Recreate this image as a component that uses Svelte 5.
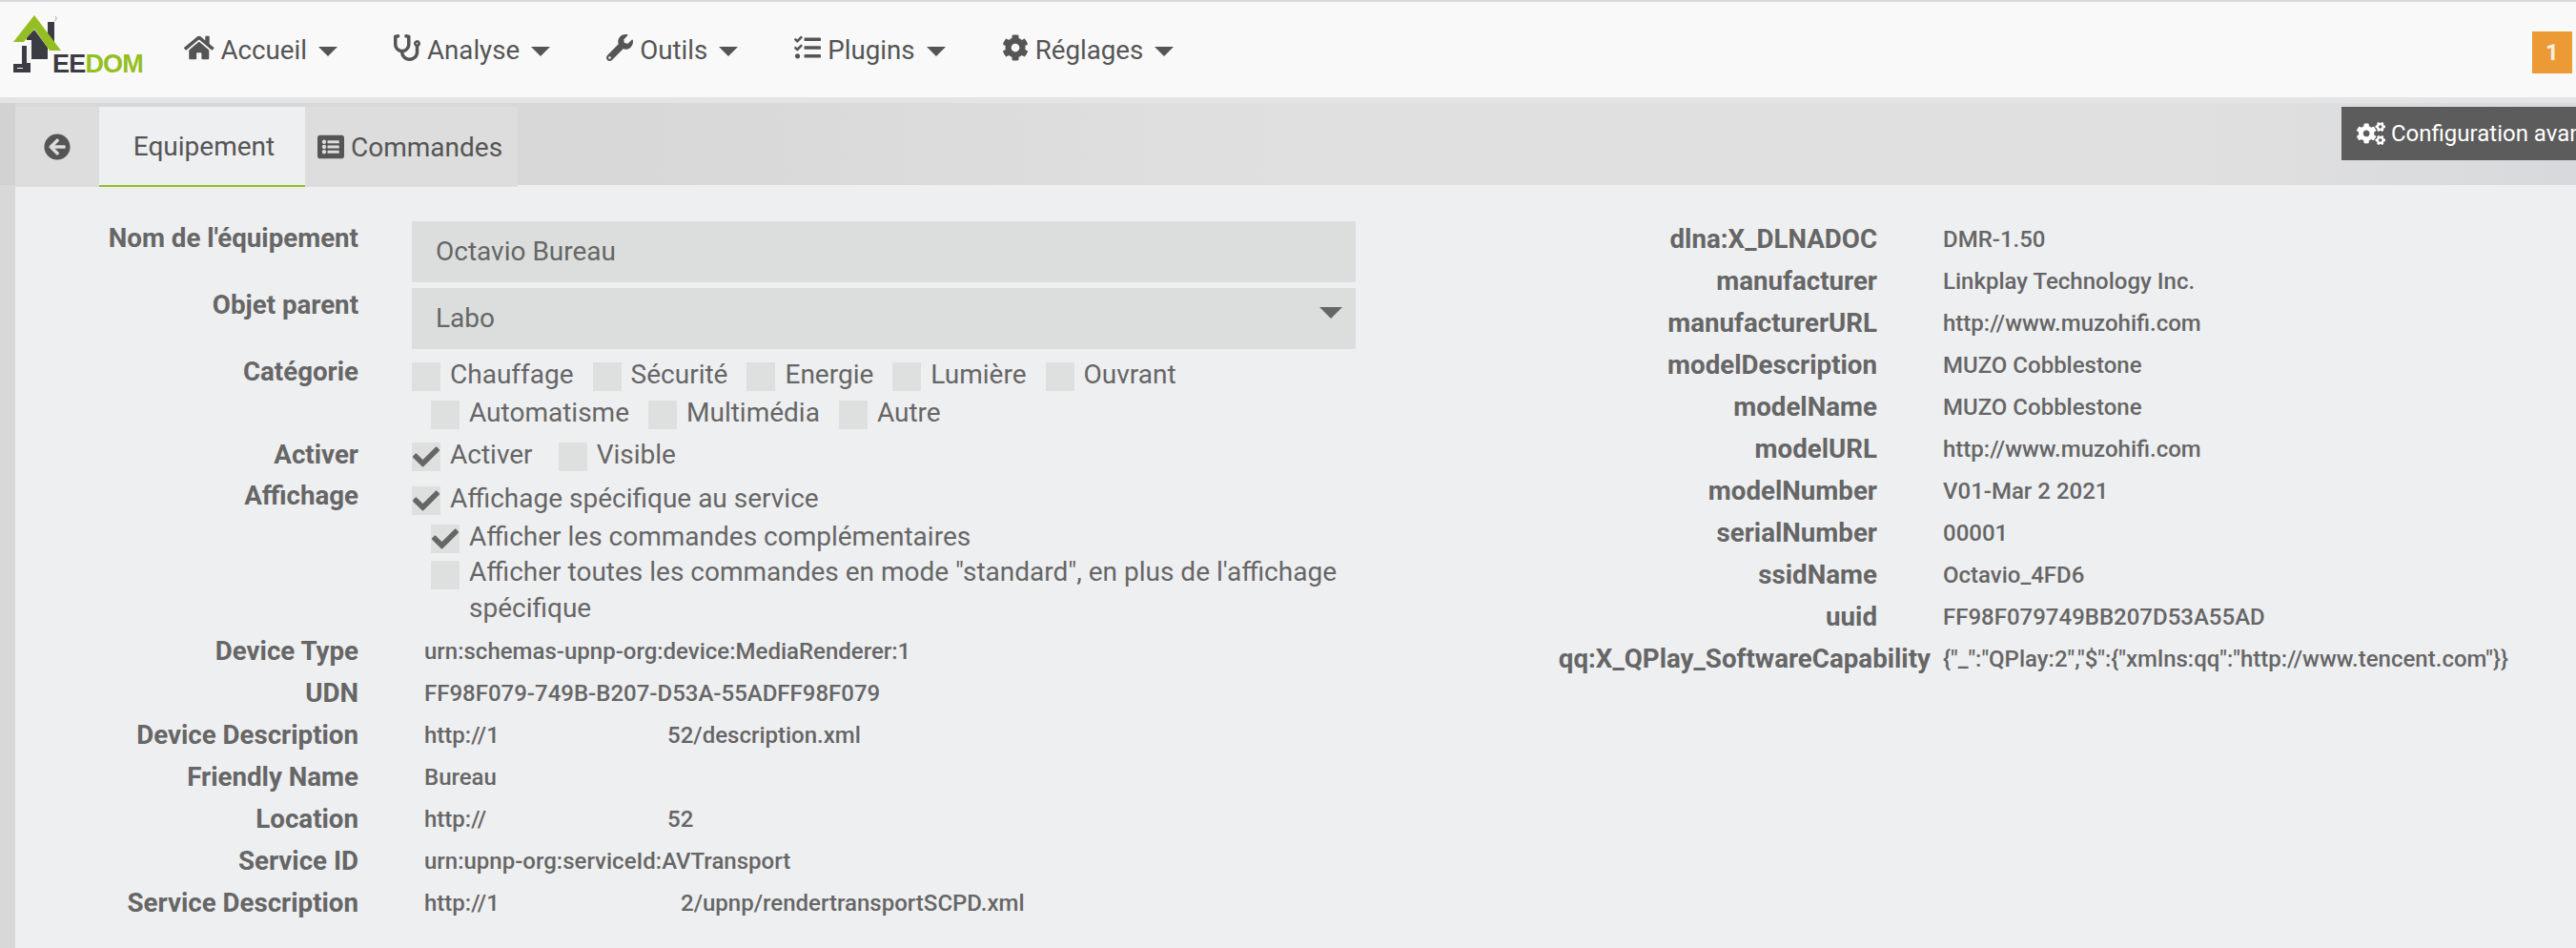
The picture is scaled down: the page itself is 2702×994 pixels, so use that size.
<script>
  const icons = {
    home: { w: 576, d: "M280.37 148.26L96 300.11V464a16 16 0 0 0 16 16l112.06-.29a16 16 0 0 0 15.92-16V368a16 16 0 0 1 16-16h64a16 16 0 0 1 16 16v95.64a16 16 0 0 0 16 16.05L464 480a16 16 0 0 0 16-16V300L295.67 148.26a12.19 12.19 0 0 0-15.3 0zM571.6 251.47L488 182.56V44.05a12 12 0 0 0-12-12h-56a12 12 0 0 0-12 12v72.61L318.47 43a48 48 0 0 0-61 0L4.34 251.47a12 12 0 0 0-1.6 16.9l25.5 31A12 12 0 0 0 45.15 301l235.22-193.74a12.19 12.19 0 0 1 15.3 0L530.9 301a12 12 0 0 0 16.9-1.6l25.5-31a12 12 0 0 0-1.7-16.93z" },
    stethoscope: { w: 512, d: "M447.1 112c-34.2.5-62.3 28.4-63 62.6-.5 24.3 12.5 45.6 32 56.8V344c0 57.3-50.2 104-112 104-60 0-109.2-44.1-111.9-99.2C265 333.8 320 269.2 320 192V36.6c0-11.4-8.1-21.3-19.3-23.5L237.8.5c-13-2.6-25.6 5.8-28.2 18.8L206.4 35c-2.6 13 5.8 25.6 18.8 28.2l30.7 6.1v121.4c0 52.9-42.2 96.7-95.1 97.2-53.4.5-96.9-42.7-96.9-96V69.4l30.7-6.1c13-2.6 21.4-15.2 18.8-28.2l-3.1-15.7C107.7 6.4 95.1-2 82.1.6L19.3 13C8.1 15.3 0 25.1 0 36.6V192c0 77.3 55.1 142 128.1 156.8C130.7 439.2 208.6 512 304 512c97 0 176-75.4 176-168V231.4c19.1-11.1 32-31.7 32-55.4 0-35.7-29.2-64.5-64.9-64zm.9 80c-8.8 0-16-7.2-16-16s7.2-16 16-16 16 7.2 16 16-7.2 16-16 16z" },
    wrench: { w: 512, d: "M507.73 109.1c-2.24-9.03-13.54-12.09-20.12-5.51l-74.36 74.36-67.88-11.31-11.31-67.88 74.36-74.36c6.62-6.62 3.43-17.9-5.66-20.16-47.38-11.74-99.55.91-136.58 37.93-39.64 39.64-50.55 97.1-34.05 147.2L18.74 402.76c-24.99 24.99-24.99 65.51 0 90.5 24.99 24.99 65.51 24.99 90.5 0l213.21-213.21c50.12 16.71 107.47 5.68 147.37-34.22 37.07-37.07 49.7-89.32 37.91-136.73zM64 472c-13.25 0-24-10.75-24-24 0-13.26 10.75-24 24-24s24 10.74 24 24c0 13.25-10.75 24-24 24z" },
    tasks: { w: 512, d: "M139.61 35.5a12 12 0 0 0-17 0L58.93 98.81l-22.7-22.12a12 12 0 0 0-17 0L3.53 92.41a12 12 0 0 0 0 17l47.59 47.4a12.78 12.78 0 0 0 17.61 0l15.59-15.62L156.52 69a12.09 12.09 0 0 0 .09-17zm0 159.19a12 12 0 0 0-17 0l-63.68 63.72-22.7-22.1a12 12 0 0 0-17 0L3.53 252a12 12 0 0 0 0 17L51 316.5a12.77 12.77 0 0 0 17.6 0l15.7-15.69 72.2-72.22a12 12 0 0 0 .09-16.9zM64 368c-26.49 0-48.59 21.5-48.59 48S37.53 464 64 464a48 48 0 0 0 0-96zm432 16H208a16 16 0 0 0-16 16v32a16 16 0 0 0 16 16h288a16 16 0 0 0 16-16v-32a16 16 0 0 0-16-16zm0-320H208a16 16 0 0 0-16 16v32a16 16 0 0 0 16 16h288a16 16 0 0 0 16-16V80a16 16 0 0 0-16-16zm0 160H208a16 16 0 0 0-16 16v32a16 16 0 0 0 16 16h288a16 16 0 0 0 16-16v-32a16 16 0 0 0-16-16z" },
    cog: { w: 512, d: "M487.4 315.7l-42.6-24.6c4.3-23.2 4.3-47 0-70.2l42.6-24.6c4.9-2.8 7.1-8.6 5.5-14-11.1-35.6-30-67.8-54.7-94.6-3.8-4.1-10-5.1-14.8-2.3L380.8 110c-17.9-15.4-38.5-27.3-60.8-35.1V25.8c0-5.6-3.9-10.5-9.4-11.7-36.7-8.2-74.3-7.8-109.2 0-5.5 1.2-9.4 6.1-9.4 11.7V75c-22.2 7.9-42.8 19.8-60.8 35.1L88.7 85.5c-4.9-2.8-11-1.9-14.8 2.3-24.7 26.7-43.6 58.9-54.7 94.6-1.7 5.4.6 11.2 5.5 14L67.3 221c-4.3 23.2-4.3 47 0 70.2l-42.6 24.6c-4.9 2.8-7.1 8.6-5.5 14 11.1 35.6 30 67.8 54.7 94.6 3.8 4.1 10 5.1 14.8 2.3l42.6-24.6c17.9 15.4 38.5 27.3 60.8 35.1v49.2c0 5.6 3.9 10.5 9.4 11.7 36.7 8.2 74.3 7.8 109.2 0 5.5-1.2 9.4-6.1 9.4-11.7v-49.2c22.2-7.9 42.8-19.8 60.8-35.1l42.6 24.6c4.9 2.8 11 1.9 14.8-2.3 24.7-26.7 43.6-58.9 54.7-94.6 1.5-5.5-.7-11.3-5.6-14.1zM256 336c-44.1 0-80-35.9-80-80s35.9-80 80-80 80 35.9 80 80-35.9 80-80 80z" },
    back: { w: 512, d: "M256 504C119 504 8 393 8 256S119 8 256 8s248 111 248 248-111 248-248 248zm28.9-143.6L209.4 288H392c13.3 0 24-10.7 24-24v-16c0-13.3-10.7-24-24-24H209.4l75.5-72.4c9.7-9.3 9.9-24.8.4-34.3l-11-10.9c-9.4-9.4-24.6-9.4-33.9 0L107.7 239c-9.4 9.4-9.4 24.6 0 33.9l132.7 132.7c9.4 9.4 24.6 9.4 33.9 0l11-10.9c9.5-9.5 9.3-25-.4-34.3z" },
    list: { w: 512, d: "M464 480H48c-26.51 0-48-21.49-48-48V80c0-26.51 21.49-48 48-48h416c26.51 0 48 21.49 48 48v352c0 26.51-21.49 48-48 48zM128 120c-22.091 0-40 17.909-40 40s17.909 40 40 40 40-17.909 40-40-17.909-40-40-40zm0 96c-22.091 0-40 17.909-40 40s17.909 40 40 40 40-17.909 40-40-17.909-40-40-40zm0 96c-22.091 0-40 17.909-40 40s17.909 40 40 40 40-17.909 40-40-17.909-40-40-40zm288-136v-32c0-6.627-5.373-12-12-12H204c-6.627 0-12 5.373-12 12v32c0 6.627 5.373 12 12 12h200c6.627 0 12-5.373 12-12zm0 96v-32c0-6.627-5.373-12-12-12H204c-6.627 0-12 5.373-12 12v32c0 6.627 5.373 12 12 12h200c6.627 0 12-5.373 12-12zm0 96v-32c0-6.627-5.373-12-12-12H204c-6.627 0-12 5.373-12 12v32c0 6.627 5.373 12 12 12h200c6.627 0 12-5.373 12-12z" },
    check: { w: 512, d: "M173.898 439.404l-166.4-166.4c-9.997-9.997-9.997-26.206 0-36.204l36.203-36.204c9.997-9.998 26.207-9.998 36.204 0L192 312.69 432.095 72.596c9.997-9.997 26.207-9.997 36.204 0l36.203 36.204c9.997 9.997 9.997 26.206 0 36.204l-294.4 294.401c-9.998 9.997-26.207 9.997-36.204-.001z" },
    cogs: { w: 640, d: "M512.1 191l-8.2 14.3c-3 5.3-9.4 7.5-15.1 5.4-11.8-4.4-22.6-10.7-32.1-18.6-4.6-3.8-5.8-10.5-2.8-15.7l8.2-14.3c-6.9-8-12.3-17.3-15.9-27.4h-16.5c-6 0-11.2-4.3-12.2-10.3-2-12-2.1-24.6 0-37.1 1-6 6.2-10.4 12.2-10.4h16.5c3.6-10.1 9-19.4 15.9-27.4l-8.2-14.3c-3-5.2-1.9-11.9 2.8-15.7 9.5-7.9 20.4-14.2 32.1-18.6 5.7-2.1 12.1.1 15.1 5.4l8.2 14.3c10.5-1.9 21.2-1.9 31.7 0L552 6.3c3-5.3 9.4-7.5 15.1-5.4 11.8 4.4 22.6 10.7 32.1 18.6 4.6 3.8 5.8 10.5 2.8 15.7l-8.2 14.3c6.9 8 12.3 17.3 15.9 27.4h16.5c6 0 11.2 4.3 12.2 10.3 2 12 2.1 24.6 0 37.1-1 6-6.2 10.4-12.2 10.4h-16.5c-3.6 10.1-9 19.4-15.9 27.4l8.2 14.3c3 5.2 1.9 11.9-2.8 15.7-9.5 7.9-20.4 14.2-32.1 18.6-5.7 2.1-12.1-.1-15.1-5.4l-8.2-14.3c-10.4 1.9-21.2 1.9-31.7 0zm-10.5-58.8c38.5 29.6 82.4-14.3 52.8-52.8-38.5-29.7-82.4 14.3-52.8 52.8zM386.3 286.1l33.7 16.8c10.1 5.8 14.5 18.1 10.5 29.1-8.9 24.2-26.4 46.4-42.6 65.8-7.4 8.9-20.2 11.1-30.3 5.3l-29.1-16.8c-16 13.7-34.6 24.6-54.9 31.7v33.6c0 11.6-8.3 21.6-19.7 23.6-24.6 4.2-50.4 4.4-75.9 0-11.5-2-20-11.9-20-23.6V418c-20.3-7.2-38.9-18-54.9-31.7L74 403c-10 5.8-22.9 3.6-30.3-5.3-16.2-19.4-33.3-41.6-42.2-65.7-4-10.9.4-23.2 10.5-29.1l33.3-16.8c-3.9-20.9-3.9-42.4 0-63.4L12 205.8c-10.1-5.8-14.6-18.1-10.5-29 8.9-24.2 26-46.4 42.2-65.8 7.4-8.9 20.2-11.1 30.3-5.3l29.1 16.8c16-13.7 34.6-24.6 54.9-31.7V57.1c0-11.5 8.2-21.5 19.6-23.5 24.6-4.2 50.5-4.4 76-.1 11.5 2 20 11.9 20 23.6v33.6c20.3 7.2 38.9 18 54.9 31.7l29.1-16.8c10-5.8 22.9-3.6 30.3 5.3 16.2 19.4 33.2 41.6 42.1 65.8 4 10.9.1 23.2-10 29.1l-33.7 16.8c3.9 21 3.9 42.5 0 63.5zm-117.6 21.1c59.2-77-28.7-164.9-105.7-105.7-59.2 77 28.7 164.9 105.7 105.7zm243.4 182.7l-8.2 14.3c-3 5.3-9.4 7.5-15.1 5.4-11.8-4.4-22.6-10.7-32.1-18.6-4.6-3.8-5.8-10.5-2.8-15.7l8.2-14.3c-6.9-8-12.3-17.3-15.9-27.4h-16.5c-6 0-11.2-4.3-12.2-10.3-2-12-2.1-24.6 0-37.1 1-6 6.2-10.4 12.2-10.4h16.5c3.6-10.1 9-19.4 15.9-27.4l-8.2-14.3c-3-5.2-1.9-11.9 2.8-15.7 9.5-7.9 20.4-14.2 32.1-18.6 5.7-2.1 12.1.1 15.1 5.4l8.2 14.3c10.5-1.9 21.2-1.9 31.7 0l8.2-14.3c3-5.3 9.4-7.5 15.1-5.4 11.8 4.4 22.6 10.7 32.1 18.6 4.6 3.8 5.8 10.5 2.8 15.7l-8.2 14.3c6.9 8 12.3 17.3 15.9 27.4h16.5c6 0 11.2 4.3 12.2 10.3 2 12 2.1 24.6 0 37.1-1 6-6.2 10.4-12.2 10.4h-16.5c-3.6 10.1-9 19.4-15.9 27.4l8.2 14.3c3 5.2 1.9 11.9-2.8 15.7-9.5 7.9-20.4 14.2-32.1 18.6-5.7 2.1-12.1-.1-15.1-5.4l-8.2-14.3c-10.4 1.9-21.2 1.9-31.7 0zM501.6 431c38.5 29.6 82.4-14.3 52.8-52.8-38.5-29.6-82.4 14.3-52.8 52.8z" }
  }

  const menu = [
    { icon: "home", label: "Accueil" },
    { icon: "stethoscope", label: "Analyse" },
    { icon: "wrench", label: "Outils" },
    { icon: "tasks", label: "Plugins" },
    { icon: "cog", label: "Réglages" }
  ]

  // masked parts of the addresses are kept as a blank gap of this many px
  const details = [
    { label: "Device Type", value: "urn:schemas-upnp-org:device:MediaRenderer:1" },
    { label: "UDN", value: "FF98F079-749B-B207-D53A-55ADFF98F079" },
    { label: "Device Description", value: "http://1", gap: 255, tail: "52/description.xml" },
    { label: "Friendly Name", value: "Bureau" },
    { label: "Location", value: "http://", gap: 255, tail: "52" },
    { label: "Service ID", value: "urn:upnp-org:serviceId:AVTransport" },
    { label: "Service Description", value: "http://1", gap: 269, tail: "2/upnp/rendertransportSCPD.xml" }
  ]

  const extra = [
    ["dlna:X_DLNADOC", "DMR-1.50"],
    ["manufacturer", "Linkplay Technology Inc."],
    ["manufacturerURL", "http://www.muzohifi.com"],
    ["modelDescription", "MUZO Cobblestone"],
    ["modelName", "MUZO Cobblestone"],
    ["modelURL", "http://www.muzohifi.com"],
    ["modelNumber", "V01-Mar 2 2021"],
    ["serialNumber", "00001"],
    ["ssidName", "Octavio_4FD6"],
    ["uuid", "FF98F079749BB207D53A55AD"],
    ["qq:X_QPlay_SoftwareCapability", '{"_":"QPlay:2","$":{"xmlns:qq":"http://www.tencent.com"}}']
  ]
</script>

{#snippet icon(name, cls)}
  <svg class={cls} viewBox="0 0 {icons[name].w} 512" aria-hidden="true"><path d={icons[name].d} /></svg>
{/snippet}

{#snippet check(text, on)}
  <label class="check">
    <span class="box">
      {#if on}{@render icon("check", "tick")}{/if}
    </span>
    <span class="check-text">{text}</span>
  </label>
{/snippet}

<div class="page">
  <nav class="navbar">
    <svg class="logo" viewBox="0 0 150 84" aria-label="Jeedom">
      <path d="M36 31 50 50V62H33V42H28V39z" fill="#3b3b43" />
      <path d="M50 23h7v22h-7z" fill="#3b3b43" />
      <path d="M36 16 64 53H52L36 30 25 44H14z" fill="#93bf22" />
      <path d="M23 48h5v18h4v10H14V67h9z" fill="#3b3b43" />
      <path d="M18 71h6v1h-6z" fill="#f9f9f9" />
      <path d="M29 44h3v3h-3zM29 49h3v17h-3z" fill="#f1f1f1" />
      <path d="M57 22c2-1 3-3 1-5" fill="none" stroke="#999" stroke-width="1" />
      <text x="55" y="76" class="logo-text"><tspan fill="#3b3b43">EE</tspan><tspan fill="#93bf22">DOM</tspan></text>
    </svg>
    <ul class="menu">
      {#each menu as item}
        <li>
          {@render icon(item.icon, "menu-icon")}
          <span>{item.label}</span>
          <i class="caret"></i>
        </li>
      {/each}
    </ul>
    <span class="badge">1</span>
  </nav>

  <div class="strip"></div>

  <div class="tabbar">
    <a class="tab back">{@render icon("back", "tab-icon")}</a>
    <a class="tab active">Equipement</a>
    <a class="tab">{@render icon("list", "tab-icon")}Commandes</a>
    <div class="config">
      {@render icon("cogs", "config-icon")}<span>Configuration avancée</span>
    </div>
  </div>

  <main class="content">
    <section class="form">
      <div class="row">
        <div class="label">Nom de l'équipement</div>
        <div class="field">Octavio Bureau</div>
      </div>
      <div class="row select-row">
        <div class="label">Objet parent</div>
        <div class="field select">Labo<i class="select-caret"></i></div>
      </div>
      <div class="row category">
        <div class="label">Catégorie</div>
        <div class="checks">
          <div class="line">
            {@render check("Chauffage")}
            {@render check("Sécurité")}
            {@render check("Energie")}
            {@render check("Lumière")}
            {@render check("Ouvrant")}
          </div>
          <div class="line indent">
            {@render check("Automatisme")}
            {@render check("Multimédia")}
            {@render check("Autre")}
          </div>
        </div>
      </div>
      <div class="row activer">
        <div class="label">Activer</div>
        <div class="checks">
          <div class="line wide">
            {@render check("Activer", true)}
            {@render check("Visible")}
          </div>
        </div>
      </div>
      <div class="row affichage">
        <div class="label">Affichage</div>
        <div class="checks">
          <div class="line">{@render check("Affichage spécifique au service", true)}</div>
          <div class="line indent">{@render check("Afficher les commandes complémentaires", true)}</div>
          <div class="line indent last">{@render check('Afficher toutes les commandes en mode "standard", en plus de l\'affichage spécifique')}</div>
        </div>
      </div>
      <div class="details">
        {#each details as d}
          <div class="detail">
            <div class="label">{d.label}</div>
            <div class="value">
              {#if d.gap}<span class="head" style="width: {d.gap}px">{d.value}</span>{d.tail}{:else}{d.value}{/if}
            </div>
          </div>
        {/each}
      </div>
    </section>

    <section class="side">
      {#each extra as [name, val]}
        <div class="side-row">
          <div class="label">{name}</div>
          <div class="value">{val}</div>
        </div>
      {/each}
    </section>
  </main>
</div>

<style>
  :global(body) {
    margin: 0;
    background: #eeeff1;
  }

  .page {
    width: 2702px;
    height: 994px;
    overflow: hidden;
    background: #eeeff1;
    font-family: Roboto, "Liberation Sans", sans-serif;
    font-size: 28px;
    color: #666;
  }

  .navbar {
    display: flex;
    align-items: center;
    height: 100px;
    border-top: 2px solid #d8d8de;
    background: #f9f9f9;
  }

  .logo {
    width: 150px;
    height: 84px;
    margin: -2px 0 0 0;
    align-self: flex-start;
    flex: none;
  }

  .logo-text {
    font-family: "Liberation Sans", sans-serif;
    font-weight: 700;
    font-size: 27px;
    letter-spacing: -0.8px;
  }

  .menu {
    display: flex;
    align-items: center;
    gap: 59px;
    list-style: none;
    margin: 0 0 0 43px;
    padding: 0;
    color: #555;
    font-size: 27.7px;
  }

  .menu li {
    display: flex;
    align-items: center;
    gap: 7px;
  }

  .menu-icon {
    height: 28px;
    fill: #555;
    margin-top: -4px;
  }

  .caret {
    width: 0;
    height: 0;
    margin-left: 5px;
    margin-top: 4px;
    border-left: 10px solid transparent;
    border-right: 10px solid transparent;
    border-top: 10px solid #555;
  }

  .badge {
    margin-left: auto;
    margin-right: 4px;
    margin-top: 6px;
    width: 42px;
    height: 44px;
    background: #ec9a35;
    color: #f7efe2;
    font-size: 24px;
    font-weight: 700;
    line-height: 44px;
    text-align: center;
  }

  .strip {
    height: 6px;
    background: #e3e4e6;
  }

  .tabbar {
    display: flex;
    align-items: flex-start;
    height: 86px;
    margin-left: 16px;
    background: linear-gradient(90deg, #d8d8da 0%, #d8d8d9 25%, #e0e0e0 50%, #e0e0e0 85%, #d8d9dc 100%);
    box-shadow: -16px 0 0 #d2d2d2;
  }

  .tab {
    display: flex;
    align-items: center;
    gap: 7px;
    box-sizing: border-box;
    flex: none;
    height: 84px;
    margin-top: 4px;
    padding: 0 16px 0 13px;
    background: #dcdddc;
    color: #555;
  }

  .tab.back {
    width: 88px;
    padding: 0 0 0 30px;
  }

  .tab.active {
    width: 216px;
    justify-content: center;
    padding: 0 0 0 4px;
    background: #eeeff1;
    border-bottom: 2px solid #93bf22;
  }

  .tab-icon {
    height: 28px;
    fill: #555;
    flex: none;
  }

  .config {
    display: flex;
    align-items: center;
    gap: 6px;
    flex: none;
    box-sizing: border-box;
    width: 246px;
    height: 56px;
    margin: 4px 0 0 auto;
    padding-left: 16px;
    overflow: hidden;
    white-space: nowrap;
    background: #5c5c5c;
    color: #fff;
    font-size: 24px;
  }

  .config-icon {
    height: 24px;
    fill: #fff;
    flex: none;
  }

  .content {
    display: grid;
    grid-template-columns: 1500px 1fr;
    height: 800px;
    border-left: 16px solid #d8d8d8;
  }

  .form {
    padding-top: 38px;
  }

  .side {
    padding-top: 35px;
  }

  .row {
    display: grid;
    grid-template-columns: 360px 990px;
    column-gap: 56px;
  }

  .label {
    font-weight: 700;
    font-size: 27.7px;
    line-height: 36px;
    text-align: right;
    white-space: nowrap;
  }

  .field {
    position: relative;
    height: 64px;
    padding-left: 25px;
    background: #dcdedd;
    line-height: 64px;
  }

  .select-row {
    margin-top: 6px;
  }

  .select-caret {
    position: absolute;
    right: 14px;
    top: 20px;
    border-left: 12px solid transparent;
    border-right: 12px solid transparent;
    border-top: 12px solid #666;
  }

  .category {
    margin-top: 6px;
  }

  .category .checks,
  .affichage .checks {
    padding-top: 8px;
  }

  .activer {
    margin-top: 9px;
  }

  .activer .checks {
    padding-top: 5px;
  }

  .affichage {
    margin-top: 7px;
  }

  .line {
    display: flex;
    gap: 20px;
    min-height: 30px;
    margin-bottom: 10px;
  }

  .line:last-child {
    margin-bottom: 0;
  }

  .line.wide {
    gap: 27px;
  }

  .line.indent {
    padding-left: 20px;
  }

  .line.last {
    margin-top: -2px;
  }

  .check {
    display: flex;
    gap: 10px;
    line-height: 26px;
  }

  .line.last .check {
    line-height: 38px;
  }

  .line.last .check-text {
    margin-top: -7px;
  }

  .box {
    display: flex;
    align-items: center;
    justify-content: center;
    flex: none;
    width: 30px;
    height: 30px;
    background: #dee0df;
  }

  .tick {
    width: 28px;
    height: 28px;
    fill: #666;
  }

  .details {
    margin-top: 4px;
  }

  .detail {
    display: grid;
    grid-template-columns: 360px 1fr;
    column-gap: 69px;
    align-items: center;
    height: 44px;
  }

  .value {
    font-size: 24px;
    font-weight: 500;
    white-space: nowrap;
  }

  .head {
    display: inline-block;
  }

  .side-row {
    display: grid;
    grid-template-columns: 453px 1fr;
    column-gap: 69px;
    align-items: center;
    height: 44px;
  }

  .side-row:last-child .label {
    margin-right: -56px;
  }
</style>
